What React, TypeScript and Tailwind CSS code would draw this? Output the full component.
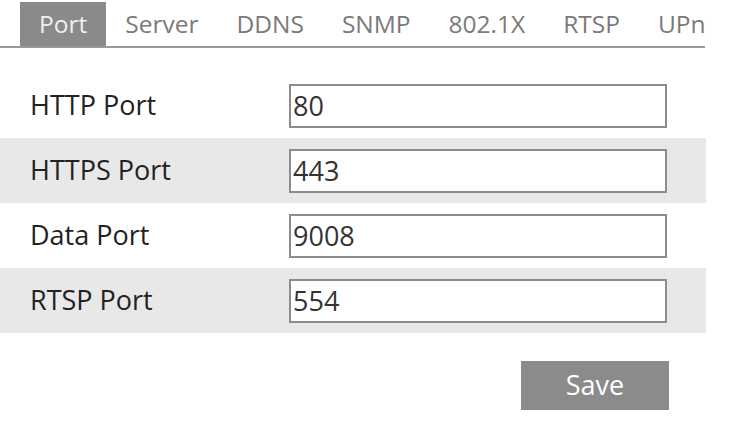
import React, { useState } from 'react';

const tabs = ['Port', 'Server', 'DDNS', 'SNMP', '802.1X', 'RTSP', 'UPnP'];

const ports = [
  { label: 'HTTP Port', value: '80' },
  { label: 'HTTPS Port', value: '443' },
  { label: 'Data Port', value: '9008' },
  { label: 'RTSP Port', value: '554' },
];

const App: React.FC = () => {
  const [active, setActive] = useState('Port');
  const [values, setValues] = useState(ports.map(p => p.value));

  return (
    <div className="w-[755px] h-[429px] bg-white overflow-hidden" style={{ fontFamily: '"Open Sans", "Noto Sans", sans-serif' }}>
      {/* Tabs */}
      <div className="w-[705px] h-[48px] overflow-hidden border-b-2 border-[#9a9a9a] flex pl-[20px] pt-[2px]">
        {tabs.map(t => (
          <button
            key={t}
            onClick={() => setActive(t)}
            className={`shrink-0 h-full px-[19px] text-[24.5px] leading-none ${active === t ? 'bg-[#8a8a8a] text-[#f0f0f0]' : 'text-[#7a7a7a]'}`}
          >
            {t}
          </button>
        ))}
      </div>

      {/* Port rows */}
      <div className="w-[706px] mt-[25px]">
        {ports.map((p, i) => (
          <div key={p.label} className={`h-[65px] flex items-center ${i % 2 === 1 ? 'bg-[#e8e8e9]' : ''}`}>
            <div className="w-[289px] pl-[30px] text-[27px] text-[#222]">{p.label}</div>
            <input
              value={values[i]}
              onChange={e => setValues(values.map((v, j) => (j === i ? e.target.value : v)))}
              className="w-[378px] h-[44px] border-2 border-[#8c8c8c] bg-white px-[2px] text-[27px] text-[#333] outline-none"
            />
          </div>
        ))}
      </div>

      <div className="w-[669px] flex justify-end mt-[28px]">
        <button className="w-[148px] h-[49px] bg-[#8b8b8c] text-white text-[27px]">Save</button>
      </div>
    </div>
  );
};

export default App;
